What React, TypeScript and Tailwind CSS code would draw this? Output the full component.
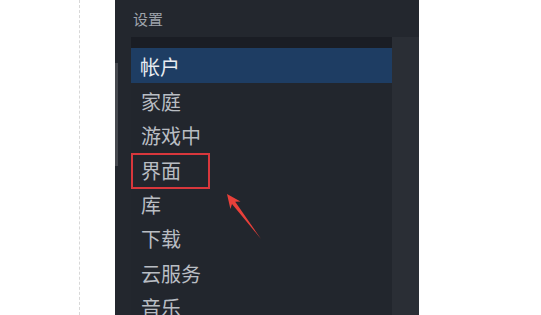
import React from "react"

const items = ["家庭", "游戏中", "界面", "库", "下载", "云服务", "音乐"]

export default function App() {
  return (
    <div
      className="relative flex h-[315px] w-[541px] overflow-hidden bg-white"
      style={{ fontFamily: '"Noto Sans CJK SC", "Noto Sans", sans-serif' }}
    >
      {/* left page margin with dotted guide */}
      <div className="flex w-[115px] shrink-0">
        <div className="w-[79px]" />
        <div className="h-full border-l border-dashed border-[#d8d8d8]" />
      </div>

      {/* steam settings panel */}
      <div className="flex w-[304px] shrink-0 flex-col bg-[#23272e]">
        <div className="flex h-[37px] shrink-0 items-center pl-[18px] pt-[1px] text-[15px] text-[#9ea3ab]">
          设置
        </div>
        <div className="flex flex-1">
          <div className="w-[16px] shrink-0">
            <div className="mt-[26px] h-[103px] w-[3px] bg-[#45484e]" />
          </div>
          <div className="flex w-[261px] shrink-0 flex-col bg-[#22262d]">
            <div className="h-[11px] bg-[#1a1d24]" />
            <div className="flex h-[35px] items-center bg-[#1e3d63] pl-[9px] pt-[2px] text-[20px] text-[#e8ecf1]">
              帐户
            </div>
            {items.map((item) => (
              <div key={item} className="flex h-[34.3px] items-center pl-[10px] pt-[4px] text-[20px] text-[#b9bdc3]">
                <span
                  className={
                    item === "界面"
                      ? "-ml-[10px] flex h-[36px] w-[79px] items-center border-2 border-[#d8373c] pl-[8px]"
                      : ""
                  }
                >
                  {item}
                </span>
              </div>
            ))}
          </div>
          <div className="flex-1 bg-[#2a2e35]" />
        </div>
      </div>

      <div className="flex-1" />

      {/* annotation arrow */}
      <svg className="pointer-events-none absolute inset-0" width="541" height="315" viewBox="0 0 541 315">
        <polygon
          points="227,194 240.5,201.5 235.2,201.8 261,239 232,204 230.4,209"
          fill="#e8403a"
        />
      </svg>
    </div>
  )
}
